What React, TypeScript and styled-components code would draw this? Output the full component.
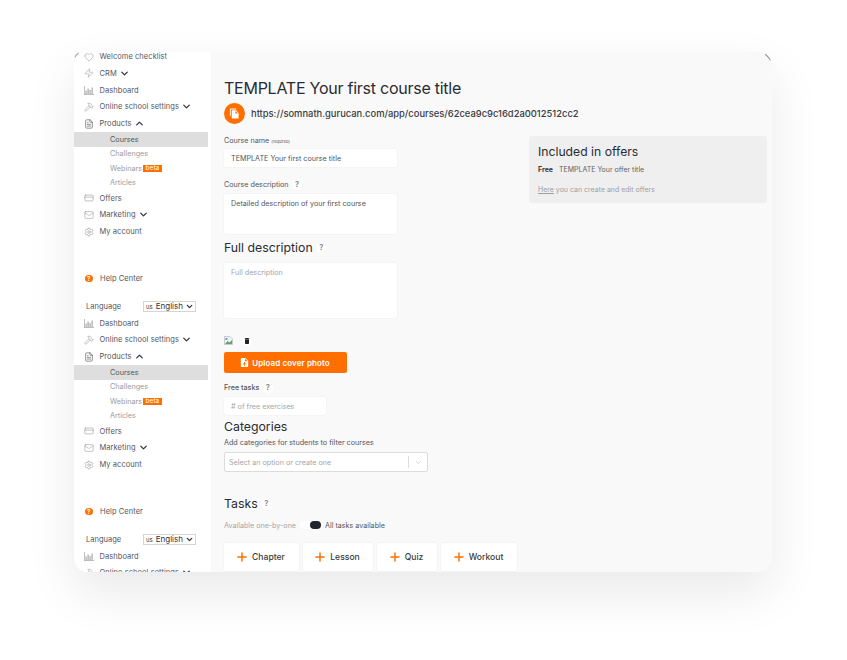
import React from "react";
import styled, { createGlobalStyle } from "styled-components";
import { Heart, Zap, Hammer, ChevronDown, ChevronUp, FileText, CreditCard, Mail, Settings, Plus } from "lucide-react";
import { MdFileCopy, MdNoteAdd, MdDelete } from "react-icons/md";

const Global = createGlobalStyle`
  html, body { margin: 0; padding: 0; background: #fff; width: 847px; height: 660px; overflow: hidden; }
  body { font-family: Inter, "Noto Sans", sans-serif; color: #2a2c33; }
  * { box-sizing: border-box; }
`;

const Page = styled.div`
  padding: 52px 75px 88px 74px;
  height: 660px;
`;

const Frame = styled.div`
  position: relative;
  width: 698px;
  height: 520px;
`;

const Window = styled.div`
  width: 100%;
  height: 100%;
  display: flex;
  border-radius: 14px;
  overflow: hidden;
  box-shadow: 0 20px 50px rgba(0, 0, 0, 0.09);
  background: #f9f9f9;
`;

const CornerArc = styled.div<{ $left?: boolean }>`
  position: absolute;
  top: 0;
  ${(p) => (p.$left ? "left: 0;" : "right: 0;")}
  ${(p) =>
    p.$left
      ? `width: 8px; height: 8px; border-top-left-radius: 8px; border-top: 1px solid #a5a5a5; border-left: 1px solid #a5a5a5;
         clip-path: polygon(0 0, 60% 0, 60% 70%, 0 70%);`
      : `width: 14px; height: 14px; border-top-right-radius: 14px; border-top: 1px solid #8a8a8a; border-right: 1px solid #8a8a8a;
         clip-path: polygon(50% 0, 100% 0, 100% 60%, 50% 60%);`}
`;

const Sidebar = styled.aside`
  width: 137px;
  flex: none;
  background: #fff;
  overflow: hidden;
  padding-right: 3px;
`;

const SideScroll = styled.div`
  margin-top: -3.8px;
`;

const SideBlock = styled.div`
  height: 233px;
`;

const NavRow = styled.div`
  height: 16.8px;
  display: flex;
  align-items: center;
  padding-left: 3.5px;
  font-size: 7.5px;
  color: #55565c;
  letter-spacing: 0.06px;
  white-space: nowrap;
`;

const NavIcon = styled.span`
  width: 22px;
  display: flex;
  justify-content: center;
  color: #8d8d90;
  flex: none;
`;

const Caret = styled.span`
  display: inline-flex;
  margin-left: 2px;
  color: #33343a;
`;

const SubRow = styled.div<{ $active?: boolean }>`
  height: 14.4px;
  display: flex;
  align-items: center;
  padding-left: 36px;
  font-size: 7.25px;
  color: ${(p) => (p.$active ? "#55565c" : "#9a9b9f")};
  background: ${(p) => (p.$active ? "#dedede" : "transparent")};
`;

const Beta = styled.span`
  background: #ff6f00;
  color: #fff;
  font-size: 6.5px;
  line-height: 7px;
  padding: 0 2.5px;
  margin-left: 1px;
`;

const HelpRow = styled.div`
  display: flex;
  align-items: center;
  height: 17px;
  margin-top: 30px;
  padding-left: 11px;
  font-size: 7.5px;
  letter-spacing: 0.06px;
  color: #55565c;
`;

const HelpDot = styled.span`
  width: 7.5px;
  height: 7.5px;
  border-radius: 50%;
  background: #ff6f00;
  color: #fff;
  font-size: 6px;
  font-weight: 700;
  display: flex;
  align-items: center;
  justify-content: center;
  margin-right: 7.5px;
`;

const LangRow = styled.div`
  display: flex;
  align-items: center;
  justify-content: space-between;
  height: 14px;
  margin-top: 12px;
  padding: 0 12px;
  font-size: 7.5px;
  color: #55565c;
`;

const LangSelect = styled.div`
  width: 53px;
  height: 11px;
  border: 1px solid #d5d5d5;
  background: #fff;
  font-size: 8px;
  color: #333;
  display: flex;
  align-items: center;
  justify-content: space-between;
  padding: 0 1px 0 2px;
  white-space: nowrap;
`;

const Flag = styled.span`
  font-size: 6px;
  margin-right: 3px;
`;

const Main = styled.main`
  flex: 1;
  min-width: 0;
  padding: 26px 5px 0 13px;
  overflow: hidden;
`;

const Title = styled.h1`
  margin: 0;
  font-size: 16px;
  letter-spacing: -0.25px;
  line-height: 20px;
  font-weight: 400;
  color: #2a2c33;
`;

const UrlRow = styled.div`
  display: flex;
  align-items: center;
  gap: 6px;
  margin-top: 4px;
  height: 22px;
  font-size: 9.4px;
  font-weight: 500;
  color: #3a3b40;
`;

const CopyCircle = styled.span`
  width: 21px;
  height: 21px;
  border-radius: 50%;
  background: #ff6f00;
  color: #fff;
  display: flex;
  align-items: center;
  justify-content: center;
  flex: none;
`;

const Columns = styled.div`
  display: flex;
  align-items: flex-start;
  margin-top: 12px;
`;

const Form = styled.div`
  width: 305px;
  flex: none;
`;

const Aside = styled.section`
  width: 238px;
  height: 67px;
  background: #efefef;
  border-radius: 3px;
  padding: 8px 9px;
`;

const AsideTitle = styled.h3`
  margin: 0;
  font-size: 12.2px;
  line-height: 16px;
  font-weight: 400;
  color: #2a2c33;
`;

const OfferLine = styled.div`
  margin-top: 5px;
  font-size: 7px;
  line-height: 10px;
  color: #5f6066;
  strong { font-weight: 700; color: #3b3c41; margin-right: 4px; }
`;

const AsideNote = styled.div`
  margin-top: 10px;
  font-size: 7px;
  line-height: 10px;
  color: #a0a0a4;
  u { color: #a0a0a4; }
`;

const Label = styled.div<{ $mt?: number; $medium?: boolean }>`
  display: flex;
  align-items: center;
  margin-top: ${(p) => p.$mt ?? 0}px;
  font-size: 7.2px;
  line-height: 10px;
  height: 10px;
  font-weight: ${(p) => (p.$medium ? 500 : 400)};
  color: #55565c;
`;

const Tiny = styled.span`
  font-size: 4px;
  margin-left: 2px;
  margin-top: 1px;
`;

const Hint = styled.span`
  width: 10px;
  height: 10px;
  border-radius: 50%;
  background: #fff;
  color: #808085;
  font-size: 7.5px;
  font-weight: 600;
  display: inline-flex;
  align-items: center;
  justify-content: center;
  margin-left: 3.5px;
`;

const Field = styled.div<{ $w: number; $h: number; $muted?: boolean; $mt: number }>`
  width: ${(p) => p.$w}px;
  height: ${(p) => p.$h}px;
  margin-top: ${(p) => p.$mt}px;
  background: #fff;
  border-radius: 2px;
  box-shadow: 0 0 0 0.5px #efefef;
  padding: 5px 7px;
  font-size: 7.2px;
  line-height: 9px;
  color: ${(p) => (p.$muted ? "#a5a5a8" : "#55565c")};
`;

const H2 = styled.h2<{ $mt: number }>`
  margin: ${(p) => p.$mt}px 0 0;
  display: flex;
  align-items: center;
  font-size: 12.3px;
  line-height: 16px;
  font-weight: 400;
  color: #2a2c33;
`;

const ImageRow = styled.div`
  display: flex;
  align-items: center;
  height: 11px;
  margin-top: 17px;
`;

const TrashDot = styled.span`
  width: 10px;
  height: 10px;
  margin-left: 9px;
  background: #fff;
  border-radius: 50%;
  display: flex;
  align-items: center;
  justify-content: center;
  color: #222;
`;

const UploadBtn = styled.button`
  display: flex;
  align-items: center;
  justify-content: center;
  gap: 2px;
  width: 123px;
  height: 21px;
  margin-top: 6px;
  padding: 0 2px 0 0;
  border: 0;
  border-radius: 2px;
  background: #ff6f00;
  color: #fff;
  font: 600 8px Inter, sans-serif;
  letter-spacing: 0.1px;
`;

const SmallText = styled.div`
  margin-top: 3px;
  font-size: 7.2px;
  line-height: 10px;
  color: #55565c;
`;

const SelectBox = styled.div`
  display: flex;
  align-items: center;
  width: 204px;
  height: 20px;
  margin-top: 4px;
  background: #fff;
  border: 1px solid #dcdcdc;
  border-radius: 2px;
  padding-left: 4px;
  font-size: 7.2px;
  color: #a5a5a8;
`;

const SelectArrow = styled.span`
  margin-left: auto;
  width: 19px;
  height: 12px;
  border-left: 1px solid #dcdcdc;
  display: flex;
  align-items: center;
  justify-content: center;
  color: #b5b5b5;
`;

const ToggleRow = styled.div`
  display: flex;
  align-items: center;
  margin-top: 7px;
  height: 12px;
  font-size: 7.15px;
  color: #a5a5a8;
`;

const Track = styled.span`
  position: relative;
  width: 21px;
  height: 8px;
  margin: 0 4px;
  background: #fff;
  border-radius: 5px;
`;

const Knob = styled.span`
  position: absolute;
  right: 0;
  top: 0;
  width: 11px;
  height: 8px;
  border-radius: 5px;
  background: #22252e;
`;

const ToggleOn = styled.span`
  color: #55565c;
`;

const AddRow = styled.div`
  display: flex;
  gap: 4px;
  margin-top: 12px;
  width: 320px;
`;

const AddBtn = styled.div<{ $w: number }>`
  width: ${(p) => p.$w}px;
  height: 28px;
  flex: none;
  display: flex;
  align-items: center;
  justify-content: center;
  gap: 3px;
  padding-right: 3px;
  background: #fff;
  box-shadow: 0 0 0 0.5px #efefef;
  border-radius: 2px;
  font-size: 8.6px;
  font-weight: 500;
  color: #3a3b40;
  svg { color: #ff6f00; }
`;

const BrokenImg = () => (
  <svg width="9" height="9" viewBox="0 0 9 9">
    <path d="M.5.5h5.500l2.500 2.500v5.500h-8z" fill="#f2f4f8" stroke="#a7adb8" strokeWidth=".6" />
    <path d="M1 8l2.500-3 2 1.500L8 4v4z" fill="#5da85d" />
    <path d="M1.500 2h2v2h-2z" fill="#6d9be0" />
  </svg>
);

const DashIcon = () => (
  <svg width="10" height="9" viewBox="0 0 10 9" fill="#a8a8ab">
    <path d="M0 0h.7v8.300H10V9H0z" />
    <path d="M1.500 4.500h1.200V8H1.500zM3.500 2.500h1.200V8H3.500zM5.500 4h1.200v4H5.500zM7.500 1.500h1.200V8H7.500z" />
  </svg>
);

const I = 10;
const Nav = ({ label, icon, caret }: { label: string; icon: React.ReactNode; caret?: "up" | "down" }) => (
  <NavRow>
    <NavIcon>{icon}</NavIcon>
    {label}
    {caret && (
      <Caret>
        {caret === "up" ? <ChevronUp size={11} strokeWidth={2.8} /> : <ChevronDown size={11} strokeWidth={2.8} />}
      </Caret>
    )}
  </NavRow>
);

const Block = () => (
  <SideBlock>
    <Nav label="Dashboard" icon={<DashIcon />} />
    <Nav label="Online school settings" caret="down" icon={<Hammer size={I} strokeWidth={1.2} />} />
    <Nav label="Products" caret="up" icon={<FileText size={I} strokeWidth={1.5} color="#55565c" />} />
    <SubRow $active>Courses</SubRow>
    <SubRow>Challenges</SubRow>
    <SubRow>Webinars<Beta>beta</Beta></SubRow>
    <SubRow>Articles</SubRow>
    <Nav label="Offers" icon={<CreditCard size={I} strokeWidth={1.3} />} />
    <Nav label="Marketing" caret="down" icon={<Mail size={I} strokeWidth={1.2} />} />
    <Nav label="My account" icon={<Settings size={I} strokeWidth={1.3} />} />
    <HelpRow><HelpDot>?</HelpDot>Help Center</HelpRow>
    <LangRow>
      Language
      <LangSelect>
        <span><Flag>us</Flag>English</span>
        <ChevronDown size={9} strokeWidth={3.5} />
      </LangSelect>
    </LangRow>
  </SideBlock>
);

export default function App() {
  return (
    <>
      <Global />
      <Page>
        <Frame>
          <Window>
            <Sidebar>
              <SideScroll>
                <Nav label="Welcome checklist" icon={<Heart size={I} strokeWidth={1.2} />} />
                <Nav label="CRM" caret="down" icon={<Zap size={I} strokeWidth={1.2} />} />
                <Block />
                <Block />
                <Block />
              </SideScroll>
            </Sidebar>
            <Main>
              <Title>TEMPLATE Your first course title</Title>
              <UrlRow>
                <CopyCircle><MdFileCopy size={11} /></CopyCircle>
                https://somnath.gurucan.com/app/courses/62cea9c9c16d2a0012512cc2
              </UrlRow>
              <Columns>
                <Form>
                  <Label>Course name<Tiny>(required)</Tiny></Label>
                  <Field $w={173} $h={18} $mt={3}>TEMPLATE Your first course title</Field>
                  <Label $mt={13}>Course description<Hint>?</Hint></Label>
                  <Field $w={173} $h={40} $mt={4}>Detailed description of your first course</Field>
                  <H2 $mt={6}>Full description<Hint>?</Hint></H2>
                  <Field $w={173} $h={55} $mt={7} $muted>Full description</Field>
                  <ImageRow><BrokenImg /><TrashDot><MdDelete size={8} /></TrashDot></ImageRow>
                  <UploadBtn><MdNoteAdd size={11} />Upload cover photo</UploadBtn>
                  <Label $mt={10} $medium>Free tasks<Hint>?</Hint></Label>
                  <Field $w={102} $h={18} $mt={4} $muted># of free exercises</Field>
                  <H2 $mt={4}>Categories</H2>
                  <SmallText>Add categories for students to filter courses</SmallText>
                  <SelectBox>
                    Select an option or create one
                    <SelectArrow><ChevronDown size={9} strokeWidth={1.5} /></SelectArrow>
                  </SelectBox>
                  <H2 $mt={24}>Tasks<Hint>?</Hint></H2>
                  <ToggleRow>
                    Available one-by-one
                    <Track><Knob /></Track>
                    <ToggleOn>All tasks available</ToggleOn>
                  </ToggleRow>
                  <AddRow>
                    <AddBtn $w={75}><Plus size={14} strokeWidth={2.5} />Chapter</AddBtn>
                    <AddBtn $w={70}><Plus size={14} strokeWidth={2.5} />Lesson</AddBtn>
                    <AddBtn $w={60}><Plus size={14} strokeWidth={2.5} />Quiz</AddBtn>
                    <AddBtn $w={76}><Plus size={14} strokeWidth={2.5} />Workout</AddBtn>
                  </AddRow>
                </Form>
                <Aside>
                  <AsideTitle>Included in offers</AsideTitle>
                  <OfferLine><strong>Free</strong> TEMPLATE Your offer title</OfferLine>
                  <AsideNote><u>Here</u> you can create and edit offers</AsideNote>
                </Aside>
              </Columns>
            </Main>
          </Window>
          <CornerArc />
          <CornerArc $left />
        </Frame>
      </Page>
    </>
  );
}
